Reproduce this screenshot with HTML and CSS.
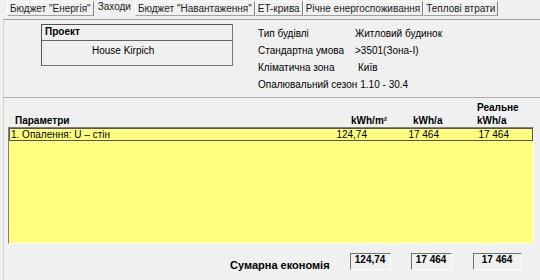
FILE: index.html
```html
<!DOCTYPE html>
<html>
<head>
    <meta charset="utf-8">
    <link rel="stylesheet" href="styles.css">
</head>
<body>
    <!-- вкладки -->
    <div class="tabs">
        <div class="tab">Бюджет "Енергія"</div>
        <div class="tab active">Заходи</div>
        <div class="tab">Бюджет "Навантаження"</div>
        <div class="tab">ET-крива</div>
        <div class="tab">Річне енергоспоживання</div>
        <div class="tab">Теплові втрати</div>
    </div>

    <!-- верхня панель -->
    <div class="top-panel">
        <div class="project">
            <div class="project-head">Проект</div>
            <div class="project-name">House Kirpich</div>
        </div>
        <div class="info">
            <div class="info-row"><span class="lbl">Тип будівлі</span><span class="val">Житловий будинок</span></div>
            <div class="info-row"><span class="lbl">Стандартна умова</span><span class="val">&gt;3501(Зона-I)</span></div>
            <div class="info-row"><span class="lbl">Кліматична зона</span><span class="val val-k">Київ</span></div>
            <div class="info-row"><span class="lbl">Опалювальний сезон</span><span class="val val-s">1.10 - 30.4</span></div>
        </div>
    </div>

    <!-- таблиця заходів -->
    <div class="main-panel">
        <div class="head-row">
            <span class="h-param">Параметри</span>
            <span>kWh/m²</span>
            <span>kWh/a</span>
            <span>Реальне<br>kWh/a</span>
        </div>
        <div class="list">
            <div class="row">
                <span>1. Опалення: U – стін</span>
                <span class="num">124,74</span>
                <span class="num">17 464</span>
                <span class="num">17 464</span>
                <span></span>
            </div>
        </div>
        <div class="total">
            <span class="total-label">Сумарна економія</span>
            <span class="box b1">124,74</span>
            <span class="box b2">17 464</span>
            <span class="box b3">17 464</span>
        </div>
    </div>
</body>
</html>
```

FILE: styles.css
```css
body {
    margin: 0;
    background: #f0f0f0;
    font-family: "Liberation Sans", Arial, sans-serif;
    font-size: 10px;
    color: #000;
    width: 540px;
    height: 280px;
    overflow: hidden;
}

/* вкладки */
.tabs {
    display: flex;
    padding-left: 7px;
    height: 17px;
    align-items: flex-start;
}
.tab {
    height: 13px;
    line-height: 13px;
    padding: 0 2px;
    margin-top: 1px;
    border-left: 1px solid #fff;
    border-top: 1px solid #fff;
    border-right: 1px solid #808080;
    border-bottom: 1px solid #a0a0a0;
    color: #222;
    white-space: nowrap;
}
.tab.active {
    border: none;
    margin-top: 0;
    padding: 0 4px;
    height: 14px;
}

/* верхня панель */
.top-panel {
    margin-left: 3px;
    margin-top: 2px;
    height: 77px;
    border-top: 1px solid #a0a0a0;
    border-left: 1px solid #d0d0d0;
    display: flex;
    align-items: flex-start;
}
.project {
    margin-left: 37px;
    margin-top: 4px;
    width: 190px;
    border: 1px solid #555;
    border-right-color: #777;
    border-bottom-color: #777;
}
.project-head {
    font-weight: bold;
    padding: 1px 3px;
    height: 13px;
    border-bottom: 1px solid #666;
}
.project-name {
    height: 24px;
    line-height: 20px;
    padding-left: 50px;
}
.info {
    display: flex;
    flex-direction: column;
    gap: 4px;
    margin-left: 25px;
    margin-top: 7px;
    line-height: 13px;
}
.info-row {
    display: flex;
    white-space: nowrap;
}
.lbl { min-width: 92px; }
.val { margin-left: 5px; }
.val-k { margin-left: 8px; }
.val-s { margin-left: 3px; }

/* таблиця */
.main-panel {
    margin-left: 3px;
    border-top: 1px solid #b0b0b0;
    border-left: 1px solid #d0d0d0;
    height: 182px;
}
.head-row {
    display: grid;
    grid-template-columns: 336px 62px 64px 1fr;
    padding-left: 11px;
    height: 29px;
    align-items: end;
    font-weight: bold;
    font-size: 10px;
    line-height: 13px;
}
.list {
    margin-left: 4px;
    width: 524px;
    height: 115px;
    background: #ffff80;
    border-left: 1px solid #808080;
    border-top: 1px solid #808080;
    border-right: 1px solid #fff;
    border-bottom: 1px solid #fff;
}
.row {
    display: grid;
    grid-template-columns: 296px 60px 72px 70px 1fr;
    height: 11px;
    line-height: 11px;
    font-size: 10px;
    border: 1px solid #555;
    padding-left: 1px;
}
.num { text-align: right; }

.total {
    display: flex;
    align-items: flex-start;
    padding-top: 9px;
}
.total-label {
    font-weight: bold;
    font-size: 11px;
    margin-left: 226px;
    margin-top: 6px;
}
.box {
    height: 15px;
    border-top: 1px solid #707070;
    border-left: 1px solid #707070;
    border-right: 1px solid #fff;
    border-bottom: 1px solid #fff;
    font-weight: bold;
    font-size: 10px;
    text-align: center;
    line-height: 11px;
}
.b1 { margin-left: 20px; width: 39px; }
.b2 { margin-left: 20px; width: 39px; }
.b3 { margin-left: 21px; width: 47px; }
```
